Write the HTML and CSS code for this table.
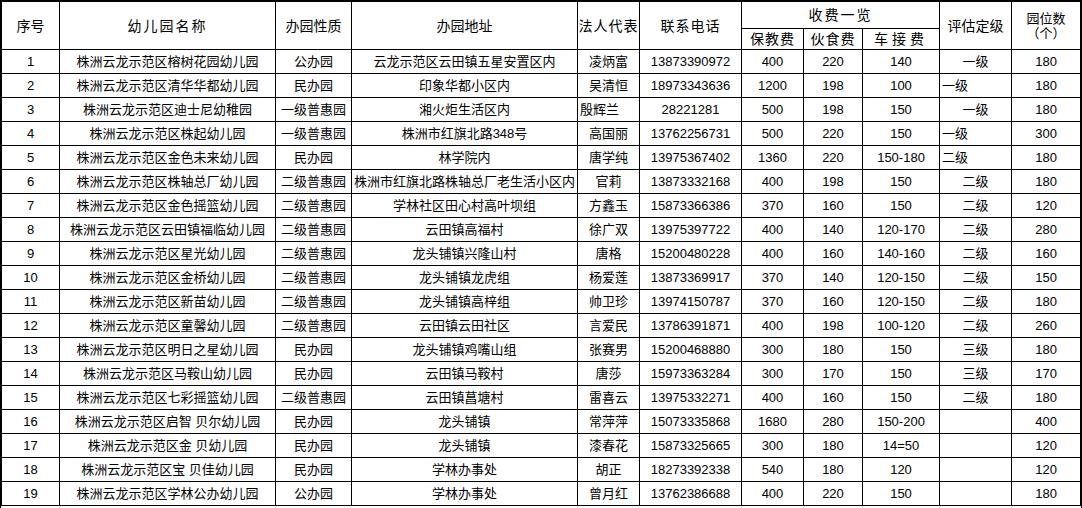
FILE: index.html
```html
<!DOCTYPE html>
<html lang="zh-CN">
<head>
<meta charset="utf-8">
<title>株洲云龙示范区幼儿园一览表</title>
<link rel="stylesheet" href="styles.css">
</head>
<body>
<div class="sheet">
<table class="grid">
<colgroup>
<col class="c-no"><col class="c-name"><col class="c-type"><col class="c-addr"><col class="c-rep"><col class="c-tel"><col class="c-fee1"><col class="c-fee2"><col class="c-fee3"><col class="c-grade"><col class="c-seat">
</colgroup>
<thead>
<tr class="h1">
<th rowspan="2">序号</th>
<th rowspan="2" class="sp2">幼儿园名称</th>
<th rowspan="2">办园性质</th>
<th rowspan="2">办园地址</th>
<th rowspan="2" class="tight">法人代表</th>
<th rowspan="2" class="sp1">联系电话</th>
<th colspan="3" class="sp2 top">收费一览</th>
<th rowspan="2">评估定级</th>
<th rowspan="2" class="seat">园位数<br>（个）</th>
</tr>
<tr class="h2">
<th class="sp1">保教费</th>
<th class="sp1">伙食费</th>
<th class="sp3">车接费</th>
</tr>
</thead>
<tbody>
<tr><td>1</td><td>株洲云龙示范区榕树花园幼儿园</td><td>公办园</td><td>云龙示范区云田镇五星安置区内</td><td>凌炳富</td><td>13873390972</td><td>400</td><td>220</td><td>140</td><td>一级</td><td>180</td></tr>
<tr><td>2</td><td>株洲云龙示范区清华华都幼儿园</td><td>民办园</td><td>印象华都小区内</td><td>吴清恒</td><td>18973343636</td><td>1200</td><td>198</td><td>100</td><td class="left">一级</td><td>180</td></tr>
<tr><td>3</td><td>株洲云龙示范区迪士尼幼稚园</td><td>一级普惠园</td><td>湘火炬生活区内</td><td class="left">殷辉兰</td><td>28221281</td><td>500</td><td>198</td><td>150</td><td>一级</td><td>180</td></tr>
<tr><td>4</td><td>株洲云龙示范区株起幼儿园</td><td>一级普惠园</td><td>株洲市红旗北路348号</td><td>高国丽</td><td>13762256731</td><td>500</td><td>220</td><td>150</td><td class="left">一级</td><td>300</td></tr>
<tr><td>5</td><td>株洲云龙示范区金色未来幼儿园</td><td>民办园</td><td>林学院内</td><td>唐学纯</td><td>13975367402</td><td>1360</td><td>220</td><td>150-180</td><td class="left">二级</td><td>180</td></tr>
<tr><td>6</td><td>株洲云龙示范区株轴总厂幼儿园</td><td>二级普惠园</td><td>株洲市红旗北路株轴总厂老生活小区内</td><td>官莉</td><td>13873332168</td><td>400</td><td>198</td><td>150</td><td>二级</td><td>180</td></tr>
<tr><td>7</td><td>株洲云龙示范区金色摇篮幼儿园</td><td>二级普惠园</td><td>学林社区田心村高叶坝组</td><td>方鑫玉</td><td>15873366386</td><td>370</td><td>160</td><td>150</td><td>二级</td><td>120</td></tr>
<tr><td>8</td><td>株洲云龙示范区云田镇福临幼儿园</td><td>二级普惠园</td><td>云田镇高福村</td><td>徐广双</td><td>13975397722</td><td>400</td><td>140</td><td>120-170</td><td>二级</td><td>280</td></tr>
<tr><td>9</td><td>株洲云龙示范区星光幼儿园</td><td>二级普惠园</td><td>龙头铺镇兴隆山村</td><td>唐格</td><td>15200480228</td><td>400</td><td>160</td><td>140-160</td><td>二级</td><td>160</td></tr>
<tr><td>10</td><td>株洲云龙示范区金桥幼儿园</td><td>二级普惠园</td><td>龙头铺镇龙虎组</td><td>杨爱莲</td><td>13873369917</td><td>370</td><td>140</td><td>120-150</td><td>二级</td><td>150</td></tr>
<tr><td>11</td><td>株洲云龙示范区新苗幼儿园</td><td>二级普惠园</td><td>龙头铺镇高梓组</td><td>帅卫珍</td><td>13974150787</td><td>370</td><td>160</td><td>120-150</td><td>二级</td><td>180</td></tr>
<tr><td>12</td><td>株洲云龙示范区童馨幼儿园</td><td>二级普惠园</td><td>云田镇云田社区</td><td>言爱民</td><td>13786391871</td><td>400</td><td>198</td><td>100-120</td><td>二级</td><td>260</td></tr>
<tr><td>13</td><td>株洲云龙示范区明日之星幼儿园</td><td>民办园</td><td>龙头铺镇鸡嘴山组</td><td>张赛男</td><td>15200468880</td><td>300</td><td>180</td><td>150</td><td>三级</td><td>180</td></tr>
<tr><td>14</td><td>株洲云龙示范区马鞍山幼儿园</td><td>民办园</td><td>云田镇马鞍村</td><td>唐莎</td><td>15973363284</td><td>300</td><td>170</td><td>150</td><td>三级</td><td>170</td></tr>
<tr><td>15</td><td>株洲云龙示范区七彩摇篮幼儿园</td><td>二级普惠园</td><td>云田镇菖塘村</td><td>雷喜云</td><td>13975332271</td><td>400</td><td>160</td><td>150</td><td>二级</td><td>180</td></tr>
<tr><td>16</td><td>株洲云龙示范区启智 贝尔幼儿园</td><td>民办园</td><td>龙头铺镇</td><td>常萍萍</td><td>15073335868</td><td>1680</td><td>280</td><td>150-200</td><td></td><td>400</td></tr>
<tr><td>17</td><td>株洲云龙示范区金 贝幼儿园</td><td>民办园</td><td>龙头铺镇</td><td>漆春花</td><td>15873325665</td><td>300</td><td>180</td><td>14=50</td><td></td><td>120</td></tr>
<tr><td>18</td><td>株洲云龙示范区宝 贝佳幼儿园</td><td>民办园</td><td>学林办事处</td><td>胡正</td><td>18273392338</td><td>540</td><td>180</td><td>120</td><td></td><td>120</td></tr>
<tr><td>19</td><td>株洲云龙示范区学林公办幼儿园</td><td>公办园</td><td>学林办事处</td><td>曾月红</td><td>13762386688</td><td>400</td><td>220</td><td>150</td><td></td><td>180</td></tr>
</tbody>
</table>
</div>
</body>
</html>
```

FILE: styles.css
```css
html, body {
  margin: 0;
  padding: 0;
  background: #fff;
}

body {
  font-family: "Liberation Sans", "Noto Sans CJK SC", sans-serif;
  font-size: 13px;
  color: #000;
}

.sheet {
  display: inline-block;
  border-top: 1px solid #000;
  border-left: 1px solid #000;
  border-right: 1px solid #000;
  border-bottom: 1px solid #000;
  padding-bottom: 2px;
}

.grid {
  border-collapse: collapse;
  table-layout: fixed;
  width: 1079px;
}

.grid th,
.grid td {
  border: 1px solid #000;
  padding: 0;
  text-align: center;
  vertical-align: middle;
  white-space: nowrap;
  overflow: hidden;
  font-weight: normal;
  line-height: 16px;
}

.grid th {
  font-size: 14px;
}

.c-no { width: 58px; }
.c-name { width: 216px; }
.c-type { width: 76px; }
.c-addr { width: 226px; }
.c-rep { width: 62px; }
.c-tel { width: 102px; }
.c-fee1 { width: 62px; }
.c-fee2 { width: 59px; }
.c-fee3 { width: 77px; }
.c-grade { width: 72px; }
.c-seat { width: 69px; }

.h1 { height: 27px; }
.h2 { height: 21px; }
.grid tbody tr { height: 24px; }

.sp1 { letter-spacing: 1px; }
.sp2 { letter-spacing: 2px; }
.sp3 { letter-spacing: 4px; }
.tight { letter-spacing: 1px; }

.grid th.seat {
  font-size: 13px;
  line-height: 15px;
}

.grid td.left {
  text-align: left;
  padding-left: 2px;
}
```
